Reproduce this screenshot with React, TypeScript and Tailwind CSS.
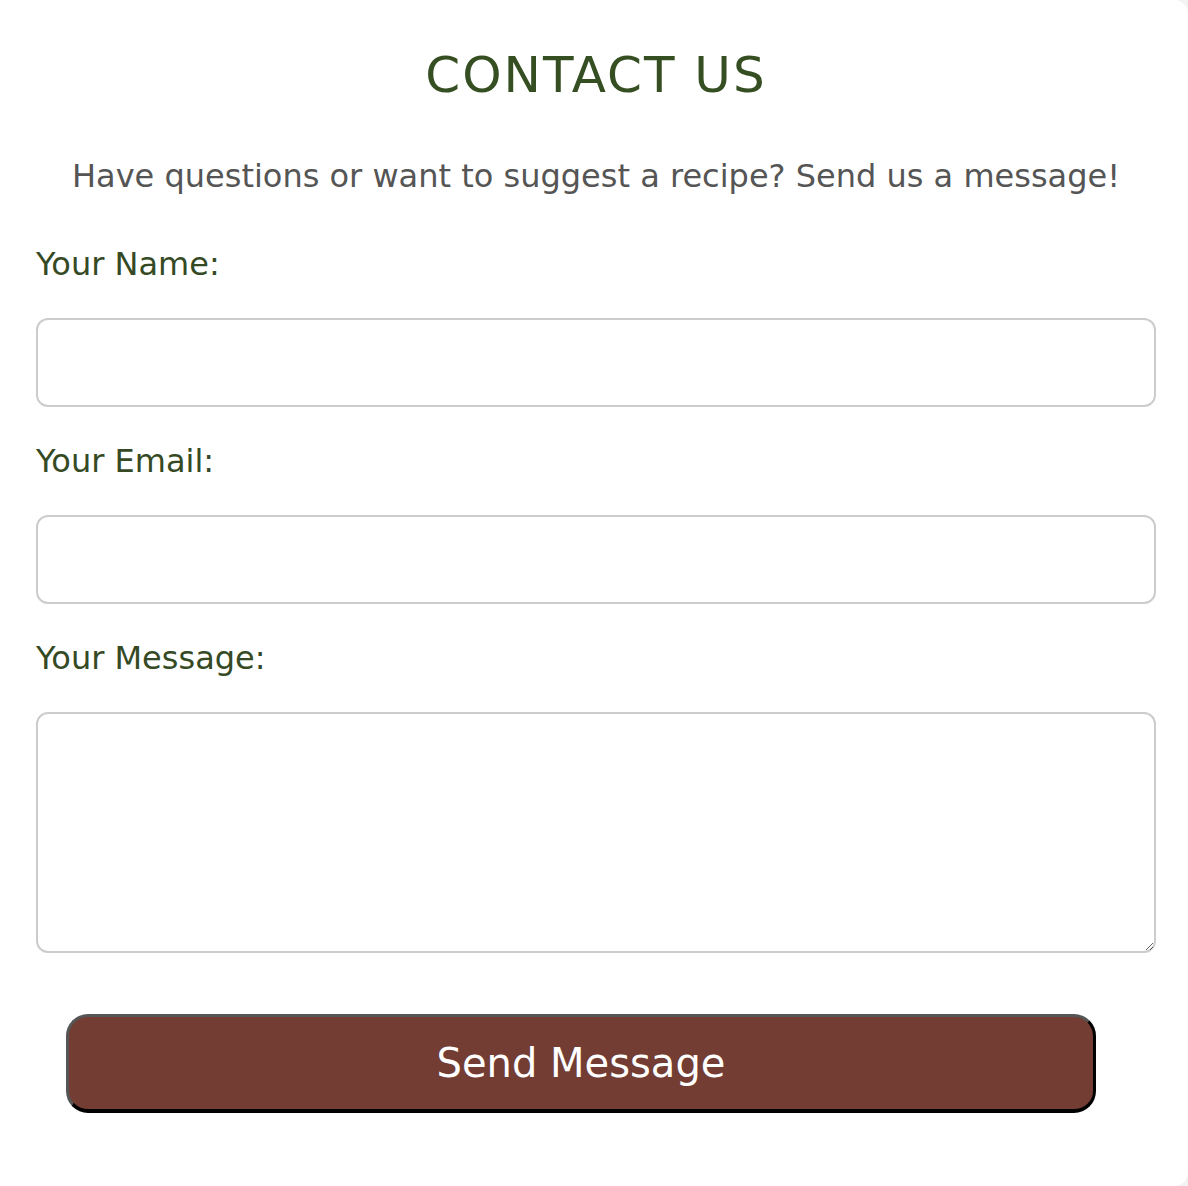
import React from "react";

export default function App() {
  const [name, setName] = React.useState("");
  const [email, setEmail] = React.useState("");
  const [message, setMessage] = React.useState("");

  return (
    <main
      className="min-h-[1186px] bg-[#f3f3f3]"
      style={{ fontFamily: '"DejaVu Sans", "Open Sans", sans-serif' }}
    >
      <div className="flex min-h-[1186px] flex-col rounded-r-[14px] bg-white pl-9 pr-8 pt-[49px]">
        <h1 className="text-center text-[50px] leading-[52px] tracking-[2px] text-[#354e22]">
          CONTACT US
        </h1>
        <p className="mt-[55px] text-center text-[32px] leading-[40px] text-[#555555]">
          Have questions or want to suggest a recipe? Send us a message!
        </p>

        <form className="mt-[48px] flex flex-col" onSubmit={(e) => e.preventDefault()}>
          <label className="text-[32px] leading-[40px] text-[#354a24]">Your Name:</label>
          <input
            type="text"
            value={name}
            onChange={(e) => setName(e.target.value)}
            className="mt-[34px] h-[89px] rounded-[12px] border-2 border-[#cccccc] px-4 text-2xl outline-none"
          />

          <label className="mt-[34px] text-[32px] leading-[40px] text-[#354a24]">Your Email:</label>
          <input
            type="email"
            value={email}
            onChange={(e) => setEmail(e.target.value)}
            className="mt-[34px] h-[89px] rounded-[12px] border-2 border-[#cccccc] px-4 text-2xl outline-none"
          />

          <label className="mt-[34px] text-[32px] leading-[40px] text-[#354a24]">Your Message:</label>
          <textarea
            value={message}
            onChange={(e) => setMessage(e.target.value)}
            className="mt-[34px] h-[241px] rounded-[12px] border-2 border-[#cccccc] px-4 py-3 text-2xl outline-none"
          />

          <button
            type="submit"
            className="ml-[30px] mr-[60px] mt-[61px] h-[99px] rounded-[22px] border-t-[3px] border-l-[3px] border-r-[3px] border-b-[4px] border-t-[#555555] border-l-[#555555] border-r-black border-b-black bg-[#733d34] text-[40px] text-white"
          >
            Send Message
          </button>
        </form>
      </div>
    </main>
  );
}
